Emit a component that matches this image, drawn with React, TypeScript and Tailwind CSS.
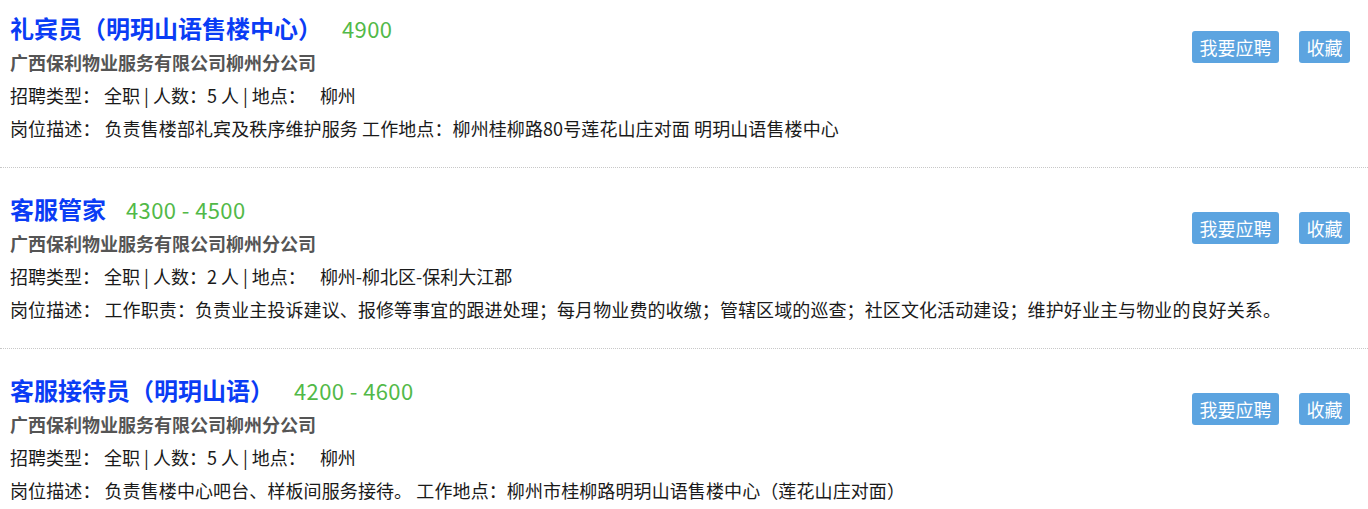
import React from "react";

type Job = { title: string; salary: string; company: string; count: string; loc: string; desc: string };

const jobs: Job[] = [
  {
    title: "礼宾员（明玥山语售楼中心）",
    salary: "4900",
    company: "广西保利物业服务有限公司柳州分公司",
    count: "5",
    loc: "柳州",
    desc: "负责售楼部礼宾及秩序维护服务 工作地点：柳州桂柳路80号莲花山庄对面 明玥山语售楼中心",
  },
  {
    title: "客服管家",
    salary: "4300 - 4500",
    company: "广西保利物业服务有限公司柳州分公司",
    count: "2",
    loc: "柳州-柳北区-保利大江郡",
    desc: "工作职责：负责业主投诉建议、报修等事宜的跟进处理；每月物业费的收缴；管辖区域的巡查；社区文化活动建设；维护好业主与物业的良好关系。",
  },
  {
    title: "客服接待员（明玥山语）",
    salary: "4200 - 4600",
    company: "广西保利物业服务有限公司柳州分公司",
    count: "5",
    loc: "柳州",
    desc: "负责售楼中心吧台、样板间服务接待。 工作地点：柳州市桂柳路明玥山语售楼中心（莲花山庄对面）",
  },
];

export default function App() {
  return (
    <div
      className="w-[1368px] h-[509px] overflow-hidden bg-white"
      style={{ fontFamily: '"Noto Sans CJK SC", "Noto Sans", sans-serif' }}
    >
      {jobs.map((j, i) => (
        <div
          key={i}
          className={`flex justify-between pl-[10px] pr-[18px] pb-[22px] border-b border-dotted border-[#c8c8c8] ${
            i === 0 ? "pt-[10px]" : "pt-[23px]"
          }`}
        >
          <div className="flex flex-col min-w-0">
            <div className="flex items-center h-[36px]">
              <span className="text-[24px] font-bold text-[#0a3cf5] leading-[36px]">{j.title}</span>
              <span className="ml-[20px] text-[22px] tracking-[0.4px] text-[#52b948] leading-[36px]">{j.salary}</span>
            </div>
            <div className="text-[18px] font-bold text-[#555555] leading-[33px]">{j.company}</div>
            <div className="text-[18px] text-[#1a1a1a] leading-[33px] whitespace-pre">
              <span>招聘类型：</span>
              <span className="ml-[4px]">{`全职 | 人数：${j.count} 人 | 地点：`}</span>
              <span className="ml-[14px]">{j.loc}</span>
            </div>
            <div className="text-[18px] text-[#1a1a1a] leading-[33px] whitespace-pre tracking-[0.1px]">
              <span>岗位描述：</span>
              <span className="ml-[4px]">{j.desc}</span>
            </div>
          </div>
          <div className="flex shrink-0 gap-[20px] pt-[21px] items-start">
            <button className="h-[32px] w-[87px] rounded-[3px] bg-[#5ca4e0] text-white text-[18px] leading-[32px] whitespace-nowrap">
              我要应聘
            </button>
            <button className="h-[32px] w-[51px] rounded-[3px] bg-[#5ca4e0] text-white text-[18px] leading-[32px] whitespace-nowrap">
              收藏
            </button>
          </div>
        </div>
      ))}
    </div>
  );
}
